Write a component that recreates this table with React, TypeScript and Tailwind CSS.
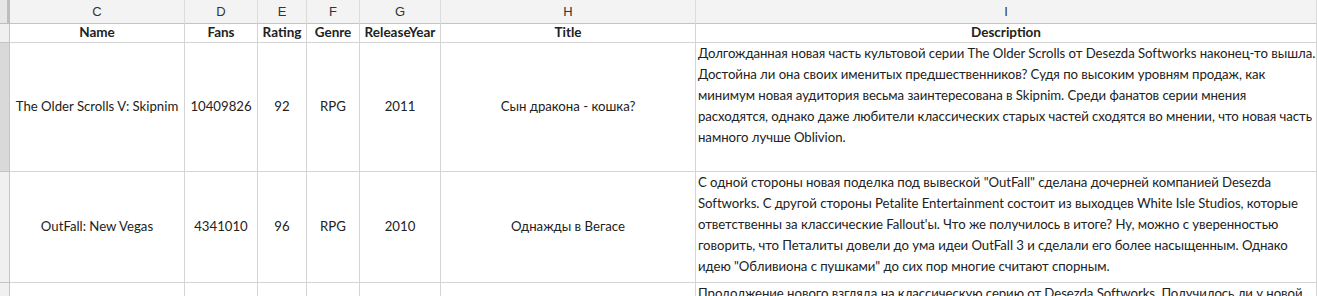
const COLUMNS = [
  { letter: "C", name: "Name" },
  { letter: "D", name: "Fans" },
  { letter: "E", name: "Rating" },
  { letter: "F", name: "Genre" },
  { letter: "G", name: "ReleaseYear" },
  { letter: "H", name: "Title" },
  { letter: "I", name: "Description" },
];

const ROWS = [
  {
    height: "h-[129px]",
    strip: "bg-[#d9d9d9]",
    cells: ["The Older Scrolls V: Skipnim", "10409826", "92", "RPG", "2011", "Сын дракона - кошка?"],
    description:
      "Долгожданная новая часть культовой серии The Older Scrolls от Desezda Softworks наконец-то вышла. Достойна ли она своих именитых предшественников? Судя по высоким уровням продаж, как минимум новая аудитория весьма заинтересована в Skipnim. Среди фанатов серии мнения расходятся, однако даже любители классических старых частей сходятся во мнении, что новая часть намного лучше Oblivion.",
  },
  {
    height: "h-[111px]",
    strip: "bg-[#f0f0f0]",
    cells: ["OutFall: New Vegas", "4341010", "96", "RPG", "2010", "Однажды в Вегасе"],
    description:
      "С одной стороны новая поделка под вывеской \"OutFall\" сделана дочерней компанией Desezda Softworks. С другой стороны Petalite Entertainment состоит из выходцев White Isle Studios, которые ответственны за классические Fallout'ы. Что же получилось в итоге? Ну, можно с уверенностью говорить, что Петалиты довели до ума идеи OutFall 3 и сделали его более насыщенным. Однако идею \"Обливиона с пушками\" до сих пор многие считают спорным.",
  },
  {
    height: "h-[40px]",
    strip: "bg-[#f0f0f0]",
    cells: ["", "", "", "", "", ""],
    description:
      "Продолжение нового взгляда на классическую серию от Desezda Softworks. Получилось ли у новой части превзойти своих предшественников?",
  },
];

const cell = "border-b border-r border-[#d4d4d4] overflow-hidden";

export default function App() {
  return (
    <div className="h-[296px] w-[1317px] overflow-hidden bg-white font-['Lato',sans-serif] text-[13.2px] text-[#222]">
      <div className="grid grid-cols-[10px_175px_73px_49px_53px_81px_255px_1fr]">
        {/* column letters */}
        <div className="h-[24px] border-b border-r-[3px] border-[#bdbdbd] bg-[#e6e6e6]" />
        {COLUMNS.map((col) => (
          <div
            key={col.letter}
            className="flex h-[24px] items-center justify-center border-b border-r border-b-[#c4c4c4] border-r-[#dcdcdc] bg-[#f3f3f3] font-['Liberation_Sans',sans-serif] text-[13px] text-[#333]"
          >
            {col.letter}
          </div>
        ))}

        {/* header names */}
        <div className="h-[19px] border-b border-r border-[#c4c4c4] bg-[#f0f0f0]" />
        {COLUMNS.map((col) => (
          <div
            key={col.name}
            className={`${cell} flex h-[19px] items-center justify-center text-[13.5px] font-bold leading-none`}
          >
            {col.name}
          </div>
        ))}

        {ROWS.map((row, i) => (
          <div key={i} className="contents">
            <div className={`${row.height} border-b border-r border-[#c4c4c4] ${row.strip}`} />
            {row.cells.map((value, j) => (
              <div
                key={j}
                className={`${cell} ${row.height} flex items-center justify-center whitespace-nowrap`}
              >
                {value}
              </div>
            ))}
            <div className={`${cell} ${row.height} pl-[2px] leading-[21px] tracking-[-0.05px]`}>
              {row.description}
            </div>
          </div>
        ))}
      </div>
    </div>
  );
}
